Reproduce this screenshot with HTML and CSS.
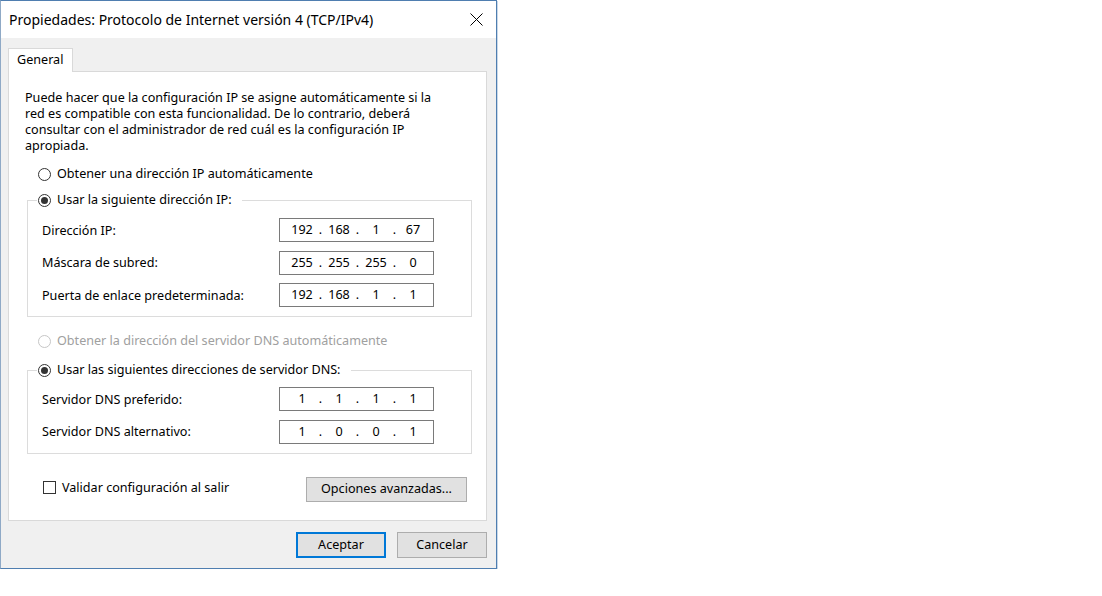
FILE: index.html
```html
<!DOCTYPE html>
<html lang="es">
<head>
<meta charset="utf-8">
<title>Propiedades: Protocolo de Internet versión 4 (TCP/IPv4)</title>
<link rel="stylesheet" href="styles.css">
</head>
<body>
<div class="window">
  <div class="titlebar">
    <span class="title">Propiedades: Protocolo de Internet versión 4 (TCP/IPv4)</span>
    <svg class="close" width="13" height="13" viewBox="0 0 13 13"><path d="M0.5 0.5 L12.5 12.5 M12.5 0.5 L0.5 12.5" stroke="#000" stroke-width="1" fill="none"/></svg>
  </div>
  <div class="body">
    <div class="tabs"><div class="tab">General</div></div>
    <div class="panel">
      <p class="intro">Puede hacer que la configuración IP se asigne automáticamente si la<br>red es compatible con esta funcionalidad. De lo contrario, deberá<br>consultar con el administrador de red cuál es la configuración IP<br>apropiada.</p>
      <div class="radio-row first"><span class="radio"></span>Obtener una dirección IP automáticamente</div>
      <fieldset class="group group-ip">
        <legend class="legend"><span class="radio checked"></span>Usar la siguiente dirección IP:</legend>
        <div class="field"><span class="label">Dirección IP:</span>
          <div class="ip"><span>192</span><span>.</span><span>168</span><span>.</span><span>1</span><span>.</span><span>67</span></div></div>
        <div class="field"><span class="label">Máscara de subred:</span>
          <div class="ip"><span>255</span><span>.</span><span>255</span><span>.</span><span>255</span><span>.</span><span>0</span></div></div>
        <div class="field"><span class="label">Puerta de enlace predeterminada:</span>
          <div class="ip"><span>192</span><span>.</span><span>168</span><span>.</span><span>1</span><span>.</span><span>1</span></div></div>
      </fieldset>
      <div class="radio-row disabled"><span class="radio"></span>Obtener la dirección del servidor DNS automáticamente</div>
      <fieldset class="group group-dns">
        <legend class="legend"><span class="radio checked"></span>Usar las siguientes direcciones de servidor DNS:</legend>
        <div class="field"><span class="label">Servidor DNS preferido:</span>
          <div class="ip"><span>1</span><span>.</span><span>1</span><span>.</span><span>1</span><span>.</span><span>1</span></div></div>
        <div class="field"><span class="label">Servidor DNS alternativo:</span>
          <div class="ip"><span>1</span><span>.</span><span>0</span><span>.</span><span>0</span><span>.</span><span>1</span></div></div>
      </fieldset>
      <div class="bottom-row">
        <div class="check"><span class="checkbox"></span>Validar configuración al salir</div>
        <div class="btn adv">Opciones avanzadas...</div>
      </div>
    </div>
    <div class="actions">
      <div class="btn primary">Aceptar</div>
      <div class="btn">Cancelar</div>
    </div>
  </div>
</div>
</body>
</html>
```
FILE: styles.css
```css
* { box-sizing: border-box; }
html, body { margin: 0; padding: 0; background: #fff; }
body {
  font-family: "Noto Sans", "Liberation Sans", sans-serif;
  font-size: 12.6px;
  color: #000;
}
.window {
  width: 497px;
  height: 569px;
  border: 1px solid #4f7eb0;
  border-left-color: #8fa9c6;
  display: flex;
  flex-direction: column;
  background: #f0f0f0;
  box-shadow: 1px 1px 0 #c9d8e8;
}
.titlebar {
  height: 37px;
  background: #fff;
  display: flex;
  align-items: center;
  justify-content: space-between;
  padding: 0 13px 0 8px;
}
.title { font-size: 14px; line-height: 16px; padding-top: 1px; }
.close { display: block; }
.body {
  flex: 1;
  padding: 10px 9px 10px 7px;
  display: flex;
  flex-direction: column;
}
.tabs { display: flex; height: 23px; }
.tab {
  width: 65px;
  height: 24px;
  background: #fff;
  border: 1px solid #d9d9d9;
  border-bottom: none;
  padding-left: 8px;
  line-height: 22px;
  position: relative;
  z-index: 1;
}
.panel {
  background: #fff;
  border: 1px solid #d9d9d9;
  padding: 18px 14px 18px 16px;
  display: flex;
  flex-direction: column;
}
.intro { margin: 0; line-height: 16px; }
.radio-row {
  display: flex;
  align-items: center;
  line-height: 16px;
  height: 16px;
  margin-left: 13px;
}
.radio-row.first { margin-top: 12px; }
.radio-row.disabled { margin-top: 16px; color: #a0a0a0; }
.radio {
  width: 13px;
  height: 13px;
  border: 1px solid #333;
  border-radius: 50%;
  margin-right: 6px;
  flex: none;
  display: flex;
  align-items: center;
  justify-content: center;
  background: #fff;
}
.radio.checked::after {
  content: "";
  width: 7px;
  height: 7px;
  border-radius: 50%;
  background: #333;
}
.disabled .radio { border-color: #c6c6c6; }
.group {
  margin: 10px 0 0 2px;
  border: 1px solid #dcdcdc;
  padding: 10px 37px 9px 9px;
  display: flex;
  flex-direction: column;
  gap: 8.5px;
  min-width: 0;
}
.group-dns { margin-top: 13px; padding-top: 9px; }
.legend {
  display: flex;
  align-items: center;
  height: 16px;
  line-height: 16px;
  padding: 0 10px 0 1px;
}
.field {
  display: flex;
  align-items: center;
  justify-content: space-between;
  padding-left: 5px;
  height: 24px;
}
.ip {
  width: 155px;
  height: 24px;
  border: 1px solid #7a7a7a;
  display: grid;
  grid-template-columns: 28px 9px 28px 9px 28px 9px 28px;
  align-items: center;
  padding-left: 8px;
  line-height: 22px;
}
.ip span { text-align: center; }
.bottom-row {
  margin-top: 23px;
  display: flex;
  align-items: center;
  justify-content: space-between;
  padding: 0 5px 0 18px;
  height: 25px;
}
.check { display: flex; align-items: center; line-height: 16px; margin-top: -3px; }
.checkbox {
  width: 13px;
  height: 13px;
  border: 1px solid #333;
  margin-right: 6px;
  background: #fff;
}
.btn {
  height: 25px;
  background: #e1e1e1;
  border: 1px solid #adadad;
  display: flex;
  align-items: center;
  justify-content: center;
  line-height: 16px;
}
.adv { width: 161px; }
.actions {
  margin-top: 11px;
  display: flex;
  justify-content: flex-end;
  gap: 11px;
}
.actions .btn { width: 90px; height: 26px; }
.btn.primary { border: 2px solid #0078d7; }
```
